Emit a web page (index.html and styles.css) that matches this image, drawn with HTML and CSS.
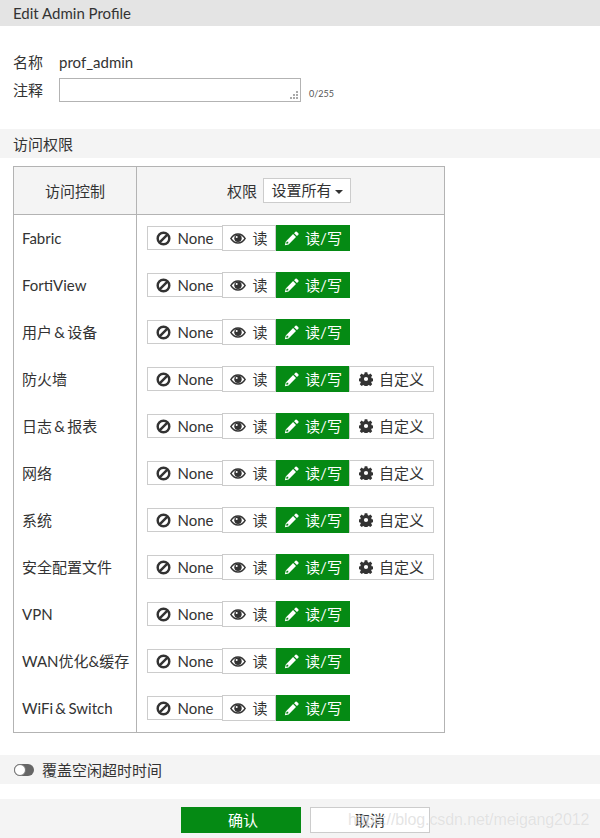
FILE: index.html
```html
<!DOCTYPE html>
<html lang="zh">
<head>
<meta charset="utf-8">
<title>Edit Admin Profile</title>
<link rel="stylesheet" href="styles.css">
</head>
<body>
<svg class="defs" width="0" height="0" aria-hidden="true">
  <symbol id="i-ban" viewBox="0 0 16 16"><circle cx="8" cy="8" r="6.200" fill="none" stroke="currentColor" stroke-width="2.600"/><path d="M3.600 12.400 12.400 3.600" stroke="currentColor" stroke-width="2.600"/></symbol>
  <symbol id="i-eye" viewBox="0 0 16 11"><path fill="currentColor" fill-rule="evenodd" d="M0 5.500C2 2 4.800.3 8 .3s6 1.700 8 5.200c-2 3.500-4.800 5.200-8 5.200S2 9 0 5.500Zm1.700 0C3.300 7.900 5.500 9.300 8 9.300s4.700-1.400 6.300-3.800C12.700 3.100 10.500 1.700 8 1.700S3.300 3.100 1.700 5.500Z"/><circle cx="8" cy="5.300" r="3.700" fill="currentColor"/><circle cx="6.700" cy="4.100" r="1" fill="#fff"/></symbol>
  <symbol id="i-pen" viewBox="0 0 16 16"><path fill="currentColor" fill-rule="evenodd" d="M12.200.8a1 1 0 0 1 1.400 0l1.700 1.700a1 1 0 0 1 0 1.400l-1.500 1.500-3.100-3.100ZM9.700 3.300l3.100 3.100-7.900 7.900-4 1 1-4Zm-7 8.200-.4 2.200 2.200-.4.100-1.800Z"/></symbol>
  <symbol id="i-gear" viewBox="0 0 16 16"><path fill="currentColor" fill-rule="evenodd" d="M6.500.3h3l.4 2.100 1.300.6 1.800-1.200 2.100 2.100-1.200 1.800.6 1.300 2.100.4v3l-2.100.4-.6 1.300 1.200 1.800-2.100 2.100-1.800-1.200-1.300.6-.4 2.100h-3l-.4-2.100-1.300-.6-1.800 1.200-2.100-2.100 1.200-1.800-.6-1.300-2.100-.4v-3l2.100-.4.600-1.300L.9 3.900 3 1.800l1.800 1.200 1.300-.6ZM8 5.600a2.400 2.400 0 1 0 0 4.800 2.400 2.400 0 0 0 0-4.800Z"/></symbol>
</svg>

<header class="title">Edit Admin Profile</header>

<section class="form">
  <div class="field">
    <span class="label">名称</span>
    <span class="value">prof_admin</span>
  </div>
  <div class="field field-comment">
    <span class="label">注释</span>
    <div class="textarea"><svg class="grip" width="8" height="8" viewBox="0 0 8 8"><path fill="#aaa" d="M6 0h2v2H6zM3 3h2v2H3zM6 3h2v2H6zM0 6h2v2H0zM3 6h2v2H3zM6 6h2v2H6z"/></svg></div>
    <span class="count">0/255</span>
  </div>
</section>

<div class="band band-perm">访问权限</div>

<table class="perm">
  <thead>
    <tr>
      <th class="col-name">访问控制</th>
      <th class="col-perm"><span class="th-label">权限</span><span class="setall">设置所有<i class="caret"></i></span></th>
    </tr>
  </thead>
  <tbody>
    <tr><td class="col-name">Fabric</td><td><div class="seg"><span class="btn none"><svg class="ic"><use href="#i-ban"/></svg>None</span><span class="btn read"><svg class="ic eye"><use href="#i-eye"/></svg>读</span><span class="btn rw"><svg class="ic"><use href="#i-pen"/></svg>读/写</span></div></td></tr>
    <tr><td class="col-name">FortiView</td><td><div class="seg"><span class="btn none"><svg class="ic"><use href="#i-ban"/></svg>None</span><span class="btn read"><svg class="ic eye"><use href="#i-eye"/></svg>读</span><span class="btn rw"><svg class="ic"><use href="#i-pen"/></svg>读/写</span></div></td></tr>
    <tr><td class="col-name">用户 &amp; 设备</td><td><div class="seg"><span class="btn none"><svg class="ic"><use href="#i-ban"/></svg>None</span><span class="btn read"><svg class="ic eye"><use href="#i-eye"/></svg>读</span><span class="btn rw"><svg class="ic"><use href="#i-pen"/></svg>读/写</span></div></td></tr>
    <tr><td class="col-name">防火墙</td><td><div class="seg"><span class="btn none"><svg class="ic"><use href="#i-ban"/></svg>None</span><span class="btn read"><svg class="ic eye"><use href="#i-eye"/></svg>读</span><span class="btn rw"><svg class="ic"><use href="#i-pen"/></svg>读/写</span><span class="btn custom"><svg class="ic"><use href="#i-gear"/></svg>自定义</span></div></td></tr>
    <tr><td class="col-name">日志 &amp; 报表</td><td><div class="seg"><span class="btn none"><svg class="ic"><use href="#i-ban"/></svg>None</span><span class="btn read"><svg class="ic eye"><use href="#i-eye"/></svg>读</span><span class="btn rw"><svg class="ic"><use href="#i-pen"/></svg>读/写</span><span class="btn custom"><svg class="ic"><use href="#i-gear"/></svg>自定义</span></div></td></tr>
    <tr><td class="col-name">网络</td><td><div class="seg"><span class="btn none"><svg class="ic"><use href="#i-ban"/></svg>None</span><span class="btn read"><svg class="ic eye"><use href="#i-eye"/></svg>读</span><span class="btn rw"><svg class="ic"><use href="#i-pen"/></svg>读/写</span><span class="btn custom"><svg class="ic"><use href="#i-gear"/></svg>自定义</span></div></td></tr>
    <tr><td class="col-name">系统</td><td><div class="seg"><span class="btn none"><svg class="ic"><use href="#i-ban"/></svg>None</span><span class="btn read"><svg class="ic eye"><use href="#i-eye"/></svg>读</span><span class="btn rw"><svg class="ic"><use href="#i-pen"/></svg>读/写</span><span class="btn custom"><svg class="ic"><use href="#i-gear"/></svg>自定义</span></div></td></tr>
    <tr><td class="col-name">安全配置文件</td><td><div class="seg"><span class="btn none"><svg class="ic"><use href="#i-ban"/></svg>None</span><span class="btn read"><svg class="ic eye"><use href="#i-eye"/></svg>读</span><span class="btn rw"><svg class="ic"><use href="#i-pen"/></svg>读/写</span><span class="btn custom"><svg class="ic"><use href="#i-gear"/></svg>自定义</span></div></td></tr>
    <tr><td class="col-name">VPN</td><td><div class="seg"><span class="btn none"><svg class="ic"><use href="#i-ban"/></svg>None</span><span class="btn read"><svg class="ic eye"><use href="#i-eye"/></svg>读</span><span class="btn rw"><svg class="ic"><use href="#i-pen"/></svg>读/写</span></div></td></tr>
    <tr><td class="col-name">WAN优化&amp;缓存</td><td><div class="seg"><span class="btn none"><svg class="ic"><use href="#i-ban"/></svg>None</span><span class="btn read"><svg class="ic eye"><use href="#i-eye"/></svg>读</span><span class="btn rw"><svg class="ic"><use href="#i-pen"/></svg>读/写</span></div></td></tr>
    <tr><td class="col-name">WiFi &amp; Switch</td><td><div class="seg"><span class="btn none"><svg class="ic"><use href="#i-ban"/></svg>None</span><span class="btn read"><svg class="ic eye"><use href="#i-eye"/></svg>读</span><span class="btn rw"><svg class="ic"><use href="#i-pen"/></svg>读/写</span></div></td></tr>
  </tbody>
</table>

<div class="band band-idle"><span class="toggle"><i class="knob"></i></span>覆盖空闲超时时间</div>

<footer class="foot">
  <span class="action ok">确认</span>
  <span class="action cancel">取消</span>
  <span class="mark">https://blog.csdn.net/meigang2012</span>
</footer>
</body>
</html>
```
FILE: styles.css
```css
* { box-sizing: border-box; }
html, body { margin: 0; padding: 0; }
body {
  width: 600px;
  height: 838px;
  overflow: hidden;
  background: #fff;
  color: #333;
  font: 15px/20px Lato, "Noto Sans CJK SC", sans-serif;
  position: relative;
}
.defs { position: absolute; }
.title {
  height: 26px;
  padding-left: 13px;
  background: #e4e4e4;
  line-height: 27px;
}
.form { padding: 26px 0 0 13px; height: 103px; }
.field { display: flex; align-items: center; height: 20px; }
.label { width: 46px; }
.field-comment { margin-top: 6px; height: 24px; }
.textarea {
  width: 242px;
  height: 24px;
  border: 1px solid #b3b3b3;
  position: relative;
}
.grip { position: absolute; right: 2px; bottom: 2px; }
.count { font-size: 9px; margin: 8px 0 0 8px; color: #555; }
.band { background: #f4f4f4; padding-left: 13px; height: 29px; line-height: 30px; }
.band-perm { margin-bottom: 8px; }
.perm {
  margin-left: 13px;
  width: 432px;
  border-collapse: collapse;
  table-layout: fixed;
}
.perm th, .perm td { border: 1px solid #b3b3b3; padding: 0; font-weight: 400; }
.perm thead th { height: 48px; background: #f4f4f4; }
.perm td { height: 47px; border-top: 0; border-bottom: 0; }
.perm tbody tr:last-child td { height: 48px; border-bottom: 1px solid #b3b3b3; }
th.col-name { width: 123px; text-align: center; }
td.col-name { padding-left: 8px; word-spacing: -1.5px; }
.perm th.col-perm { text-align: center; padding-right: 3px; }
.th-label { margin-right: 6px; vertical-align: middle; }
.setall {
  display: inline-block;
  width: 88px;
  height: 25px;
  line-height: 23px;
  border: 1px solid #ccc;
  background: #fff;
  vertical-align: middle;
}
.caret {
  display: inline-block;
  margin-left: 3px;
  vertical-align: middle;
  border: 4px solid transparent;
  border-top-color: #333;
  border-bottom: 0;
}
.seg { display: flex; align-items: center; padding-left: 10px; }
.btn {
  display: flex;
  align-items: center;
  justify-content: center;
  height: 26px;
  border: 1px solid #ccc;
  background: #fff;
  white-space: nowrap;
}
.ic { width: 15px; height: 15px; margin-right: 6px; flex: none; }
.ic.eye { width: 16px; height: 11px; }
.none { width: 76px; height: 24px; }
.read { width: 54px; margin-left: -1px; }
.rw { width: 74px; background: #058a14; border-color: #058a14; color: #fff; }
.custom { width: 85px; margin-left: -1px; }
.custom .ic { width: 14px; height: 14px; }
.band-idle {
  margin-top: 22px;
  display: flex;
  align-items: center;
  padding-left: 14px;
}
.toggle {
  display: block;
  position: relative;
  width: 20px;
  height: 12px;
  margin-right: 8px;
  border-radius: 6px;
  background: #666;
}
.knob {
  position: absolute;
  left: 0;
  top: 0;
  width: 12px;
  height: 12px;
  border-radius: 50%;
  background: #fff;
  border: 1px solid #777;
}
.foot {
  position: relative;
  margin-top: 15px;
  height: 39px;
  background: #f4f4f4;
  display: flex;
  justify-content: center;
  gap: 9px;
  padding: 8px 0 0 11px;
}
.action {
  display: block;
  width: 120px;
  height: 26px;
  line-height: 26px;
  text-align: center;
}
.ok { background: #058a14; color: #fff; padding-left: 4px; }
.cancel { background: #fff; border: 1px solid #ccc; line-height: 24px; }
.mark {
  position: absolute;
  left: 348px;
  top: 8px;
  font: 16px/26px "Liberation Sans", sans-serif;
  letter-spacing: -.1px;
  color: rgba(190, 190, 190, .42);
  text-shadow: 0 0 1px rgba(255, 255, 255, .8);
  white-space: nowrap;
}
```
